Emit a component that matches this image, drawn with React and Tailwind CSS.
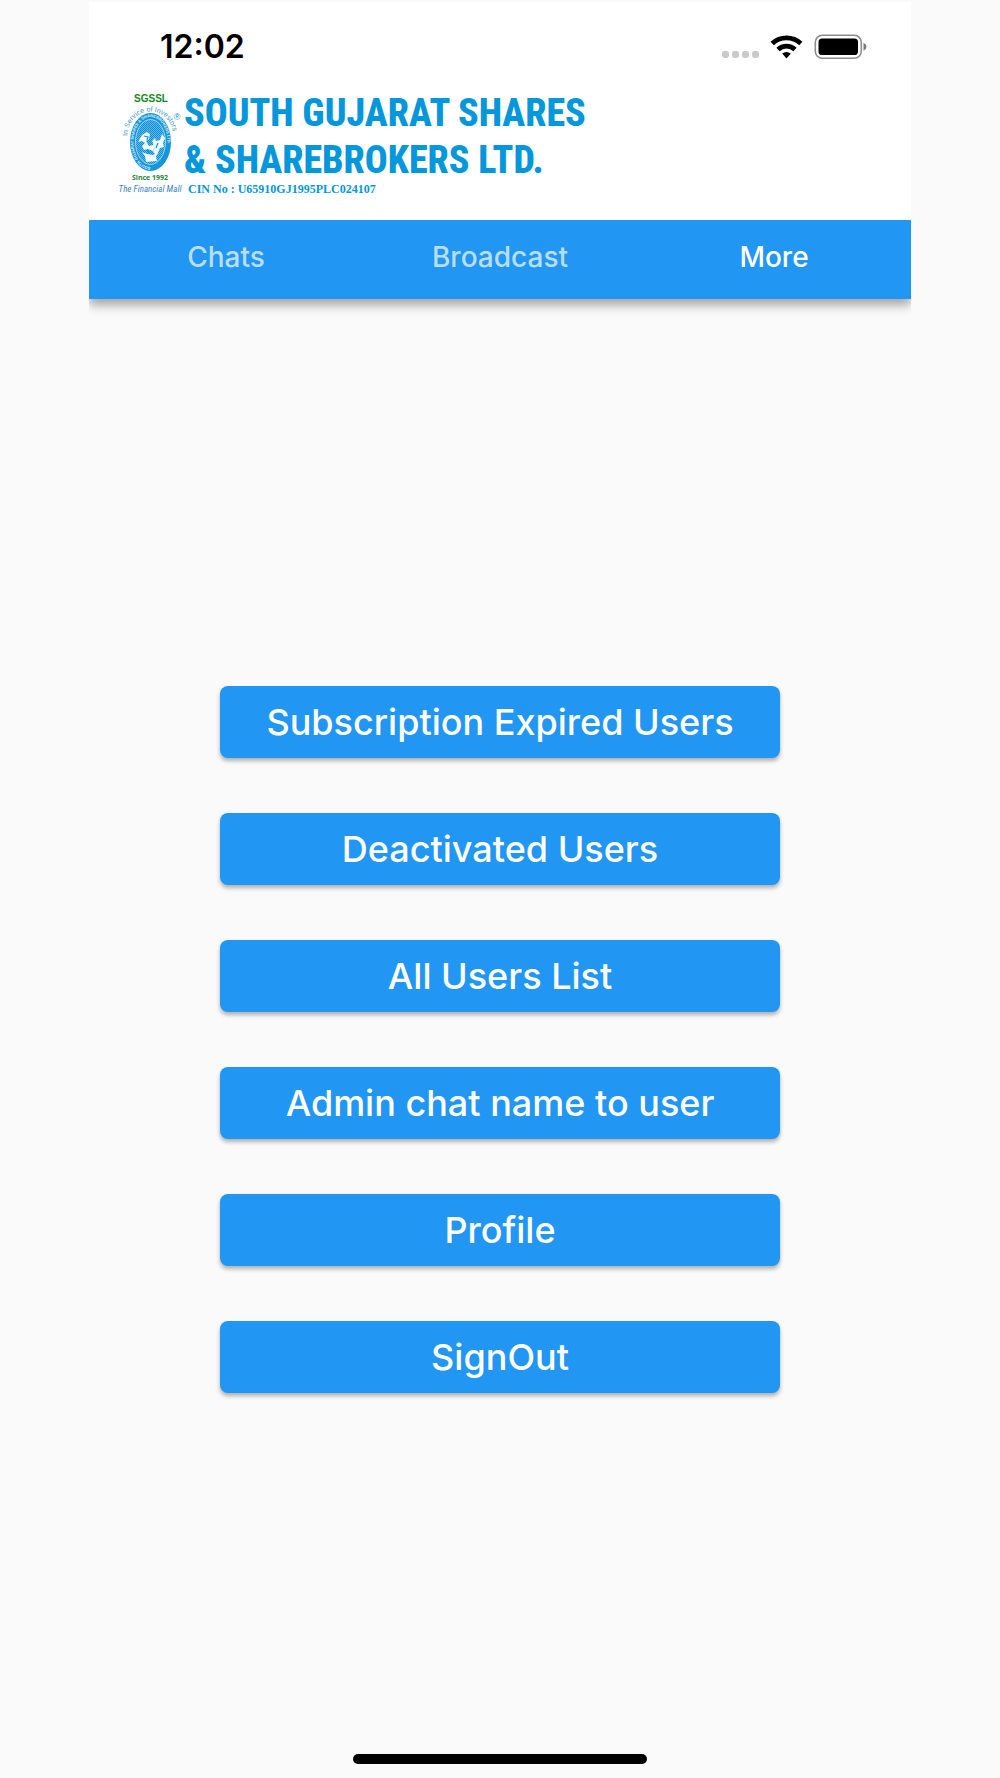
const tabs = ['Chats', 'Broadcast', 'More'];

const actions = [
  'Subscription Expired Users',
  'Deactivated Users',
  'All Users List',
  'Admin chat name to user',
  'Profile',
  'SignOut',
];

const StatusBar = () => (
  <div className="flex h-[78px] items-center justify-between pt-3 pr-11 pl-[71px]">
    <time className="text-[32px] leading-9 font-semibold text-black">12:02</time>
    <svg width="146" height="26" viewBox="0 0 146 26" aria-hidden="true">
      <g fill="#cacaca">
        <rect x="1" y="17" width="7" height="7" rx="2.4" />
        <rect x="11" y="17" width="7" height="7" rx="2.4" />
        <rect x="21" y="17" width="7" height="7" rx="2.4" />
        <rect x="31" y="17" width="7" height="7" rx="2.4" />
      </g>
      <g fill="none" stroke="#000" strokeWidth="4.8">
        <path d="M51.2 9.4a21 21 0 0 1 28.6 0" />
        <path d="M57 15.4a12.6 12.6 0 0 1 17 0" />
      </g>
      <path d="M61.2 19.6a6.4 6.4 0 0 1 8.6 0L65.5 24.4z" fill="#000" />
      <rect x="94.3" y="1.3" width="46" height="23" rx="7" fill="none" stroke="#8c8c8c" strokeWidth="1.6" />
      <rect x="97.5" y="4.5" width="39.5" height="16.5" rx="3.6" fill="#000" />
      <path d="M142.5 8.7q3 1.3 3 4t-3 4z" fill="#7a7a7a" />
    </svg>
  </div>
);

const Emblem = () => (
  <svg width="66" height="108" viewBox="0 0 66 108" aria-hidden="true" className="shrink-0">
    <defs>
      <path id="motto" d="M9.5 48A23 24.500 0 0 1 55.5 48V54" />
      <path id="ring" d="M32.5 79A17 25 0 0 1 32.5 29A17 25 0 0 1 32.5 79" />
      <pattern id="weave" width="2" height="2" patternUnits="userSpaceOnUse">
        <rect width="2" height="2" fill="#5db6e6" />
        <rect width="1" height="1" fill="#0f8fd6" />
        <rect x="1" y="1" width="1" height="1" fill="#0f8fd6" />
      </pattern>
    </defs>
    <text x="33" y="14" textAnchor="middle" fontFamily="Liberation Sans" fontWeight="700" fontSize="10" fill="#138a1c">SGSSL</text>
    <text fontFamily="Liberation Sans" fontSize="7" fill="#3a8fc8">
      <textPath href="#motto">In Service of Investors</textPath>
    </text>
    <text x="59" y="32" textAnchor="middle" fontFamily="Liberation Sans" fontSize="9" fill="#1b8fd6">®</text>
    <ellipse cx="32.5" cy="54" rx="20.5" ry="29" fill="#1296dc" />
    <text fontFamily="Liberation Sans" fontWeight="700" fontSize="4" fill="#e2f3fc">
      <textPath href="#ring">SOUTH GUJARAT SHARES &amp; SHAREBROKERS LTD.</textPath>
    </text>
    <ellipse cx="32.5" cy="54" rx="15" ry="22.5" fill="url(#weave)" stroke="#d5edf9" strokeWidth="0.7" />
    <g fill="#f1f9fe">
      <path d="M20 54l4-7 5-3 3 2-1 5-3 2 3 5 4-1 2-4 2 2-4 8-5-2-4 1-2-4 3-3-3-2z" />
      <path d="M34 53l3-3 1 3 4-1 2-6 3 4-2 5 1 4-4 1-3 7-4-3 2-5z" />
      <path d="M24 64l5 2 6 1 5-3-2 5 1 4-11 1-1-6z" />
    </g>
    <path d="M26 48l4 1-1 3M40 55l-2 5M29 62l4 3" fill="none" stroke="#1296dc" strokeWidth="1.2" />
    <text x="32" y="92" textAnchor="middle" fontFamily="Open Sans" fontWeight="700" fontSize="7" fill="#2a8440">Since 1992</text>
    <text x="32" y="104" textAnchor="middle" fontFamily="Roboto Condensed" fontStyle="italic" fontSize="9" fill="#3a85bd">The Financial Mall</text>
  </svg>
);

const Logo = () => (
  <a href="#" className="flex pt-2 pl-[29px] text-[#0497dc]">
    <Emblem />
    <div className="pt-0.5 whitespace-nowrap">
      <div className="font-['Roboto_Condensed',Roboto,sans-serif] text-[38px] leading-[47px] font-extrabold">
        <div>SOUTH GUJARAT SHARES</div>
        <div>&amp; SHAREBROKERS LTD.</div>
      </div>
      <div className="pl-1 font-['Liberation_Serif',serif] text-[12px] leading-2.5 font-bold">CIN No : U65910GJ1995PLC024107</div>
    </div>
  </a>
);

const App = () => {
  return (
    <div className="min-h-screen bg-[#fafafa] pt-0.5 font-['Inter',sans-serif]">
      <div className="relative mx-auto flex min-h-[calc(100vh-2px)] max-w-[822px] flex-col">
        <header className="bg-white pb-6">
          <StatusBar />
          <Logo />
        </header>

        <nav className="grid h-[79px] grid-cols-3 bg-[#2196f3] pb-[5px] shadow-[0_6px_10px_rgba(0,0,0,0.35)] [clip-path:inset(0_0_-20px_0)]">
          {tabs.map(tab => (
            <button
              key={tab}
              aria-current={tab === 'More' ? 'page' : undefined}
              className="text-[28px] leading-8 font-medium text-white/70 aria-[current=page]:text-white"
            >
              {tab}
            </button>
          ))}
        </nav>

        <main className="mx-auto flex w-full max-w-[560px] flex-1 flex-col justify-center gap-[55px] pt-0.5">
          {actions.map(label => (
            <button
              key={label}
              className="h-[72px] rounded-lg bg-[#2196f3] text-[36px] leading-10 font-medium text-white shadow-[0_3px_4px_rgba(0,0,0,0.3)]"
            >
              {label}
            </button>
          ))}
        </main>

        <div className="absolute bottom-3.5 left-1/2 h-2.5 w-[294px] -translate-x-1/2 rounded-full bg-black" />
      </div>
    </div>
  );
};

export default App;
